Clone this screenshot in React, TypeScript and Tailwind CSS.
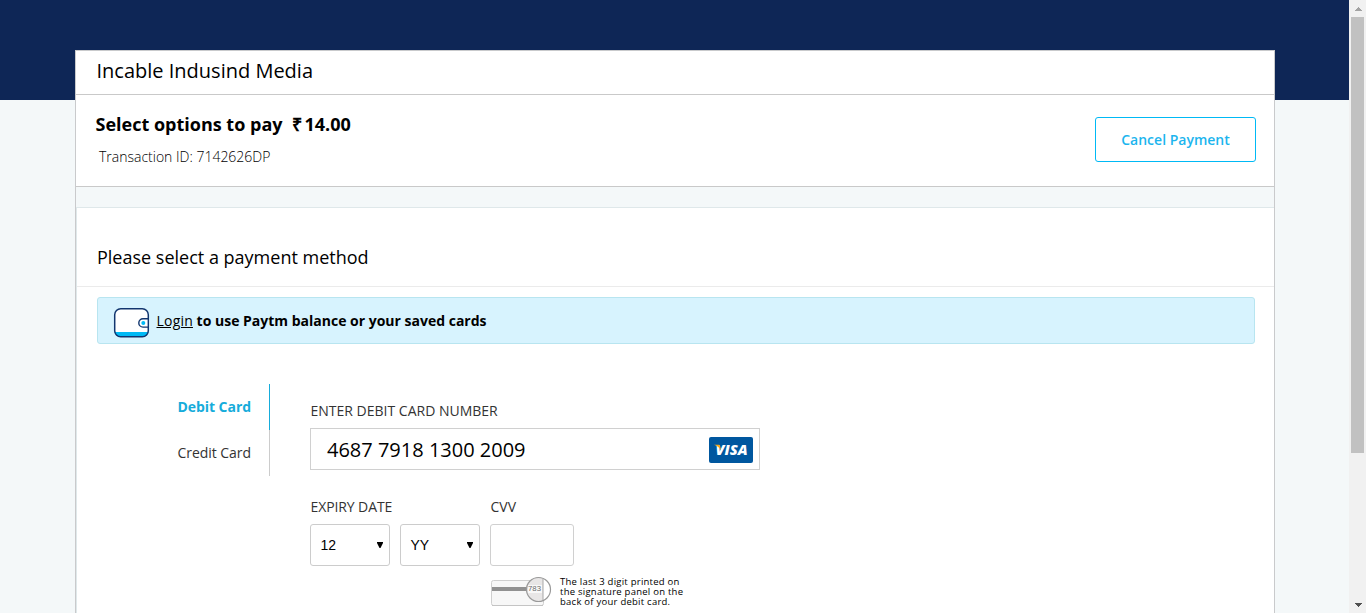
import React from "react";

function WalletIcon() {
  return (
    <svg className="block h-[31px] w-[37px] shrink-0" viewBox="0 0 37 31" fill="none">
      <rect x="1.7" y="1.7" width="33.6" height="28" rx="6" fill="#fff" />
      <path d="M1.7 25h33.600c0 3-2.500 4.700-6 4.700H7.700c-3.500 0-6-1.700-6-4.700z" fill="#00b9f5" />
      <rect x="1.700" y="1.700" width="33.600" height="28" rx="6" stroke="#12366f" strokeWidth="1.500" />
      <path d="M35.300 11.700H30a4.200 4.200 0 0 0 0 8.400h5.300z" fill="#fff" stroke="#12366f" strokeWidth="1.400" />
      <circle cx="30.300" cy="15.900" r="2" fill="#00b9f5" />
    </svg>
  );
}

function VisaLogo() {
  return (
    <svg className="block h-[26px] w-11" viewBox="0 0 44 26">
      <rect width="44" height="26" rx="2" fill="#00579f" />
      <text
        x="6.500"
        y="18"
        textLength="32"
        lengthAdjust="spacingAndGlyphs"
        fill="#fff"
        className="font-['Open_Sans',sans-serif] text-[14px] font-extrabold italic"
      >
        VISA
      </text>
      <path d="M5 7.700h4.400c1 0 1.500.500 1.700 1.300l.900 4.300C10.500 10.800 8.500 8.900 5 7.700z" fill="#faa61a" />
    </svg>
  );
}

function CvvCard() {
  return (
    <svg className="block h-[30px] w-[62px] shrink-0" viewBox="0 0 62 30" fill="none">
      <rect x="1.500" y="4.500" width="52" height="25" rx="2" fill="#f7f7f7" stroke="#cfcfcf" />
      <path d="M2 29.500h51" stroke="#c4c4c4" />
      <rect x="2" y="11" width="36" height="4" fill="#919191" />
      <circle cx="48.500" cy="13.500" r="12" fill="#fff" />
      <path d="M53 2.400A12 12 0 1 0 53 24.600z" fill="#e8e6e6" />
      <path d="M53 2.400v22.200" stroke="#a8a8a8" />
      <rect x="38" y="9" width="14" height="8" fill="#f8f8f8" />
      <circle cx="48.500" cy="13.500" r="12" stroke="#999" strokeWidth="1.200" />
      <text x="38" y="15" textLength="13" lengthAdjust="spacingAndGlyphs" fill="#6b6b6b" className="font-['Liberation_Sans',sans-serif] text-[7.5px]">
        783
      </text>
    </svg>
  );
}

function SelectBox({ value }: { value: string }) {
  return (
    <div className="flex h-[42px] w-20 items-center justify-between rounded-[3px] border border-[#ccc] pr-[6px] pl-[9.500px] font-['Liberation_Sans',Arial,sans-serif] text-[14px] text-black">
      <span>{value}</span>
      <svg className="block h-[6px] w-[6px]" viewBox="0 0 6 6">
        <path d="M0 0h6v1L3.500 6h-1L0 1z" fill="#000" />
      </svg>
    </div>
  );
}

function Scrollbar() {
  return (
    <div className="flex w-[17px] shrink-0 flex-col items-center bg-[#f1f1f1]">
      <div className="flex h-[17px] items-center pl-px">
        <svg className="block h-1 w-[7px]" viewBox="0 0 7 4" shapeRendering="crispEdges">
          <path d="M3 0h1v1h1v1h1v1h1v1H0V3h1V2h1V1h1z" fill="#a3a3a3" />
        </svg>
      </div>
      <div className="h-[436px] w-[13px] bg-[#c1c1c1]" />
      <div className="mt-auto flex h-[17px] items-center pl-px">
        <svg className="block h-1 w-[7px]" viewBox="0 0 7 4" shapeRendering="crispEdges">
          <path d="M0 0h7v1H6v1H5v1H4v1H3V3H2V2H1V1H0z" fill="#505050" />
        </svg>
      </div>
    </div>
  );
}

export default function App() {
  return (
    <div className="flex h-[613px] w-[1366px] overflow-hidden bg-[#f4f8f9] font-['Open_Sans',sans-serif] text-black">
      <div className="w-[1349px] shrink-0">
        <div className="flow-root h-[100px] bg-[#0e2656]">
          <main className="mt-[50px] ml-[75px] w-[1200px] border border-b-0 border-[#c9cacc]">
            <header className="flex h-11 items-center border-b border-[#c9c9c9] bg-white pl-[20.500px]">
              <h1 className="mt-[-4px] text-[20px] leading-6 whitespace-nowrap">Incable Indusind Media</h1>
            </header>
            <section className="flex h-[92px] justify-between border-b border-[#c9c9c9] bg-white pr-[18px] pl-[19.500px]">
              <div className="pt-[17px]">
                <h2 className="flex gap-[9px] text-[18px] leading-6 font-bold whitespace-nowrap">
                  <span>Select options to pay</span>
                  <span className="flex gap-[3px]">
                    <span>₹</span>
                    <span>14.00</span>
                  </span>
                </h2>
                <p className="mt-[11px] pl-[3.500px] text-[14px] leading-5 font-light whitespace-nowrap">Transaction ID: 7142626DP</p>
              </div>
              <button className="mt-[22px] h-[45px] w-[161px] rounded-[3px] border border-[#00b9f5] bg-white text-[14px] font-semibold text-[#1cb5ee]">
                Cancel Payment
              </button>
            </section>
            <section className="mt-5 h-[420px] border-t border-l border-[#dfe8ea] bg-white">
              <div className="flex h-[79px] border-b border-[#ebebeb] pt-[37px] pl-5">
                <h3 className="text-[18px] leading-6 whitespace-nowrap">Please select a payment method</h3>
              </div>
              <div className="mt-[10px] ml-5 flex h-[47px] w-[1158px] items-center rounded-[3px] border border-[#b8e5f0] bg-[#d7f3fe] pl-[15px] text-[14px]">
                <div className="pt-1">
                  <WalletIcon />
                </div>
                <p className="ml-[6.500px] font-bold whitespace-nowrap">
                  <a className="font-normal tracking-[0.200px] underline" href="#login">Login</a> to use Paytm balance or your saved cards
                </p>
              </div>
              <div className="mt-10 flex">
                <nav className="w-[193px] text-right text-[14px]">
                  <div className="flex h-[46px] items-center justify-end border-r border-[#16acdb] pr-[18px] pb-[2px] font-bold tracking-[-0.05px] text-[#16acdb]">Debit Card</div>
                  <div className="flex h-[46px] items-center justify-end border-r border-[#ccc] pr-[18px] pb-[2px] tracking-[-0.05px] text-[#333]">Credit Card</div>
                </nav>
                <form className="ml-10 w-[450px] pt-[17px] text-[14px] text-[#333]">
                  <label className="block h-[27px] pl-[0.500px] leading-5">ENTER DEBIT CARD NUMBER</label>
                  <div className="flex h-[42px] items-center justify-between border border-[#d0d0d0] pt-[2px] pr-[6px] pl-4">
                    <span className="text-[20px] text-black">4687 7918 1300 2009</span>
                    <VisaLogo />
                  </div>
                  <div className="mt-[27px] flex gap-[10px]">
                    <div className="w-[170px]">
                      <label className="block h-[27px] pl-[0.500px] leading-5 tracking-[-0.1px]">EXPIRY DATE</label>
                      <div className="flex gap-[10px]">
                        <SelectBox value="12" />
                        <SelectBox value="YY" />
                      </div>
                    </div>
                    <div>
                      <label className="block h-[27px] pl-[0.500px] leading-5">CVV</label>
                      <div className="h-[42px] w-[84px] rounded-[3px] border border-[#d0d0d0]" />
                      <div className="mt-[10px] flex">
                        <CvvCard />
                        <p className="mt-px ml-2 text-[9.500px] leading-[10px] tracking-[0.250px] whitespace-nowrap text-black">
                          The last 3 digit printed on
                          <br />
                          the signature panel on the
                          <br />
                          back of your debit card.
                        </p>
                      </div>
                    </div>
                  </div>
                </form>
              </div>
            </section>
          </main>
        </div>
      </div>
      <Scrollbar />
    </div>
  );
}
